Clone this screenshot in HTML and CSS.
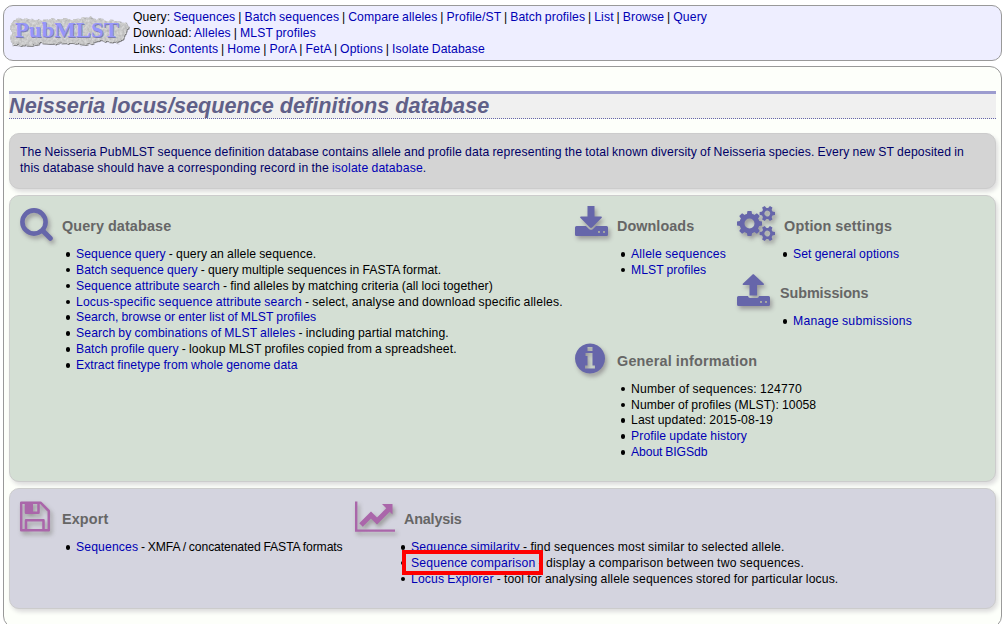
FILE: index.html
```html
<!DOCTYPE html>
<html lang="en">
<head>
<meta charset="utf-8">
<title>Neisseria locus/sequence definitions database</title>
<link rel="stylesheet" href="styles.css">
</head>
<body>
<header class="masthead">
  <svg class="logo" viewBox="8 10 124 44" role="img" aria-label="PubMLST">
    <defs>
      <filter id="rock" x="-5%" y="-15%" width="110%" height="130%" color-interpolation-filters="sRGB">
        <feTurbulence type="fractalNoise" baseFrequency="0.2" numOctaves="2" seed="4" result="n"/>
        <feDisplacementMap in="SourceGraphic" in2="n" scale="5" xChannelSelector="R" yChannelSelector="G" result="shape"/>
        <feTurbulence type="fractalNoise" baseFrequency="0.4" numOctaves="2" seed="9" result="g"/>
        <feColorMatrix in="g" type="matrix" values="0.22 0 0 0 0.68  0.22 0 0 0 0.68  0.22 0 0 0 0.68  0 0 0 0 1" result="grey"/>
        <feComposite in="grey" in2="shape" operator="in" result="stone"/>
        <feDropShadow in="stone" dx="0.6" dy="0.8" stdDeviation="0.4" flood-color="#666"/>
      </filter>
    </defs>
    <path filter="url(#rock)" fill="#c6c6c6" d="M15 20L22 18L34 20L54 19L76 19L84 17L104 20L127 22L128 28L123 39L116 43L98 41L86 45L72 43L50 44L39 43L32 46L14 45L11 39L12 31L10 27Z"/>
    <text class="logo-shade" x="15.600" y="37.600" textLength="104" lengthAdjust="spacingAndGlyphs">PubMLST</text>
    <text class="logo-text" x="15" y="37" textLength="104" lengthAdjust="spacingAndGlyphs">PubMLST</text>
  </svg>
  <nav class="menu">
    <div>Query: <a>Sequences</a> | <a>Batch sequences</a> | <a>Compare alleles</a> | <a>Profile/ST</a> | <a>Batch profiles</a> | <a>List</a> | <a>Browse</a> | <a>Query</a></div>
    <div class="t13">Download: <a>Alleles</a> | <a>MLST profiles</a></div>
    <div>Links: <a>Contents</a> | <a>Home</a> | <a>PorA</a> | <a>FetA</a> | <a>Options</a> | <a>Isolate Database</a></div>
  </nav>
</header>
<main class="page">
  <h1>Neisseria locus/sequence definitions database</h1>
  <div class="box intro">
    <div class="t13">The Neisseria PubMLST sequence definition database contains allele and profile data representing the total known diversity of Neisseria species. Every new ST deposited in</div>
    <div class="t15">this database should have a corresponding record in the <a>isolate database</a>.</div>
  </div>
  <div class="box queries">
    <section class="query">
      <div class="head">
        <svg class="icon" width="42" height="41" viewBox="20 205 42 41"><circle cx="34" cy="222" r="11.6" fill="none" stroke="#66a" stroke-width="4.6"/><path d="M43.5 231.5L50.3 238.3" stroke="#66a" stroke-width="5" stroke-linecap="round"/></svg>
        <h2>Query database</h2>
      </div>
      <ul>
        <li class="t10"><a>Sequence query</a> - query an allele sequence.</li>
        <li class="t6"><a>Batch sequence query</a> - query multiple sequences in FASTA format.</li>
        <li class="t10"><a>Sequence attribute search</a> - find alleles by matching criteria (all loci together)</li>
        <li class="t15"><a>Locus-specific sequence attribute search</a> - select, analyse and download specific alleles.</li>
        <li class="t6"><a>Search, browse or enter list of MLST profiles</a></li>
        <li class="t11"><a>Search by combinations of MLST alleles</a> - including partial matching.</li>
        <li class="t10"><a>Batch profile query</a> - lookup MLST profiles copied from a spreadsheet.</li>
        <li class="t5"><a>Extract finetype from whole genome data</a></li>
      </ul>
    </section>
    <div class="side">
      <section>
        <div class="head">
          <svg class="icon" width="42" height="41" viewBox="575 205 42 41"><path fill="#66a" fill-rule="evenodd" d="M587.5 206h7v10.5h6.5c1 0 1.200 .8 .5 1.500l-9.500 9.500c-.6.600-1.400.600-2 0l-9.500-9.500c-.7-.7-.5-1.500.5-1.500h6.500zM575 227.500q0-1.500 1.500-1.500h9.500l3 3q2 1.700 4 0l3-3h10.500q1.500 0 1.500 1.500v7q0 1.500-1.500 1.500h-30q-1.500 0-1.500-1.500zM598 231v2h2v-2zM603 231v2h2v-2z"/></svg>
          <h2 class="t5">Downloads</h2>
        </div>
        <ul>
          <li class="t20"><a>Allele sequences</a></li>
          <li class="t5"><a>MLST profiles</a></li>
        </ul>
      </section>
      <div class="stack">
        <section>
          <div class="head">
            <svg class="icon" width="47" height="41" viewBox="737 205 47 41">
              <defs>
                <g id="gear">
                  <circle r="7.500" fill="none" stroke="#66a" stroke-width="5"/>
                  <path fill="#66a" d="M-2-12.500h4l.8 4h-5.600zM-2 12.500h4l.8-4h-5.600zM-12.500-2v4l4 .8v-5.600zM12.500-2v4l-4 .8v-5.600z"/>
                  <path transform="rotate(45)" fill="#66a" d="M-2-12.500h4l.8 4h-5.600zM-2 12.500h4l.8-4h-5.600zM-12.500-2v4l4 .8v-5.600zM12.500-2v4l-4 .8v-5.600z"/>
                </g>
                <g id="cog">
                  <circle r="4.200" fill="none" stroke="#66a" stroke-width="2.800"/>
                  <g id="teeth"><path id="tooth" fill="#66a" d="M-1.500-7.700h3l.6 3.200h-4.200z"/><use href="#tooth" transform="rotate(60)"/><use href="#tooth" transform="rotate(120)"/></g>
                  <use href="#teeth" transform="rotate(180)"/>
                </g>
              </defs>
              <use href="#gear" x="749.500" y="223.500"/>
              <use href="#cog" transform="translate(767.300 213.500) rotate(30)"/>
              <use href="#cog" transform="translate(767.300 233.500) rotate(30)"/>
            </svg>
            <h2 class="t20">Option settings</h2>
          </div>
          <ul><li class="t10"><a>Set general options</a></li></ul>
        </section>
        <section>
          <div class="head">
            <svg class="icon" width="43" height="41" viewBox="737 272 43 41"><path fill="#66a" fill-rule="evenodd" d="M749.500 295.500v-10.500h-6c-1 0-1.200-.8-.5-1.500l9.300-8.700c.6-.6 1.400-.6 2 0l9.300 8.700c.7.700.5 1.500-.5 1.500h-6v10.500zM737 297.500q0-1.500 1.500-1.500h9.500q.5 2 2 2h7q1.500 0 2-2h9.500q1.500 0 1.500 1.500v7q0 1.500-1.500 1.500h-30q-1.500 0-1.500-1.500zM760 301v2h2v-2zM765 301v2h2v-2z"/></svg>
            <h2 class="t-10">Submissions</h2>
          </div>
          <ul><li class="t28"><a>Manage submissions</a></li></ul>
        </section>
      </div>
      <section class="wide">
        <div class="head">
          <svg class="icon" width="42" height="41" viewBox="575 340 42 41"><path fill="#66a" fill-rule="evenodd" d="M590 343.500a15 15 0 1 0 .01 0zM587.500 347h5v4h-5zM585.500 353h7v12.500h2.500v3h-10v-3h2.500v-9.500h-2z"/></svg>
          <h2 class="t20">General information</h2>
        </div>
        <ul class="facts">
          <li class="t20">Number of sequences: 124770</li>
          <li class="t8">Number of profiles (MLST): 10058</li>
          <li class="t13">Last updated: 2015-08-19</li>
          <li class="t10"><a>Profile update history</a></li>
          <li class="t-10"><a>About BIGSdb</a></li>
        </ul>
      </section>
    </div>
  </div>
  <div class="box tools">
    <section class="export">
      <div class="head">
        <svg class="icon" width="42" height="41" viewBox="20 498 42 41"><path fill="none" stroke="#a6a" stroke-width="2.500" stroke-linejoin="round" d="M21.200 502.700H40.500L48.800 511V530.300H21.200zM26 530V520.200H43.500V530M26 503V512.700H38.500V503"/><path fill="#a6a" d="M26 503h7v9h-7z"/></svg>
        <h2>Export</h2>
      </div>
      <ul><li class="t-12"><a class="t13">Sequences</a> - XMFA / concatenated FASTA formats</li></ul>
    </section>
    <section class="analysis">
      <div class="head">
        <svg class="icon" width="49" height="41" viewBox="355 498 49 41"><path fill="none" stroke="#a6a" stroke-width="2.400" d="M356.200 501.500V530.600H395"/><path fill="none" stroke="#a6a" stroke-width="5" d="M361 525L371 515L377 521L389.500 508.500"/><path fill="#a6a" d="M382 504h10.500v10.500z"/></svg>
        <h2 class="t-20">Analysis</h2>
      </div>
      <ul>
        <li class="t18"><a>Sequence similarity</a> - find sequences most similar to selected allele.</li>
        <li class="t18"><a class="marked">Sequence comparison</a> - display a comparison between two sequences.</li>
        <li><a>Locus Explorer</a> - tool for analysing allele sequences stored for particular locus.</li>
      </ul>
    </section>
  </div>
</main>
</body>
</html>
```
FILE: styles.css
```css
*, *::before, *::after { box-sizing: border-box; }
html { overflow: hidden; }
body {
  margin: 0;
  padding: 5px 3px 0;
  width: 1005px;
  height: 624px;
  overflow: hidden;
  background: #fff;
  color: #000;
  font: 12.2px/15.84px "Liberation Sans", Arial, sans-serif;
  word-spacing: -0.4px;
  letter-spacing: 0.12px;
}
a { color: #0000b4; }
.masthead {
  display: flex;
  width: 999px;
  height: 56px;
  padding: 4px 5px 0 4px;
  border: 1px solid #999;
  border-radius: 10px;
  background: #eef;
}
.logo { width: 124px; height: 44px; flex: none; }
.logo text { font: bold 20.5px "Liberation Serif", serif; letter-spacing: 0; }
.logo-text { fill: #9696fa; }
.logo-shade { fill: #7c7cb0; }
.menu { margin-left: 1px; white-space: nowrap; word-spacing: -0.6px; }
.page {
  width: 999px;
  height: 562px;
  margin-top: 5px;
  padding: 24px 5px 0;
  border: 1px solid #999;
  border-radius: 12px;
  background: #fdfffa;
}
h1 {
  margin: 0 0 14px;
  height: 28px;
  border-top: 3px solid #9c9ccf;
  border-bottom: 1px dotted #66a;
  background: #f0f0f0;
  color: #606088;
  font: italic bold 21.66px/23px "Liberation Sans", Arial, sans-serif;
  letter-spacing: 0;
  word-spacing: 0;
}
.box {
  width: 987px;
  margin-bottom: 6px;
  border: 1px solid #ccc;
  border-radius: 10px;
  box-shadow: 2px 3px 4px #ddd;
  white-space: nowrap;
}
.intro { height: 56px; padding: 11px 10px 0; background: #d4d4d4; color: #006; }
.queries { display: flex; height: 287px; padding: 9px 10px; background: #d4dfd4; }
.tools { display: flex; height: 121px; padding: 9px 10px; background: #d4d4df; }
.query { flex: none; width: 555px; }
.export { flex: none; width: 335px; }
.side { display: grid; grid-template-columns: 162px 240px; grid-template-rows: 135px auto; }
.wide { grid-column: 1 / 3; }
.stack { display: grid; grid-template-rows: 67px 67px; }
.head { display: flex; align-items: center; height: 41px; }
.icon { flex: none; overflow: visible; filter: drop-shadow(2px 3px 2px #999); }
h2 { margin: 0; color: #666; font: bold 14.4px/18px "Liberation Sans", Arial, sans-serif; }
ul { margin: 0; padding: 1px 0 0 56px; list-style: none; }
.facts { padding-top: 0.7px; }
li::before {
  content: "";
  float: left;
  width: 4.6px;
  height: 4.6px;
  margin: 5px 0 0 -10.4px;
  border-radius: 50%;
  background: #000;
}
.marked { position: relative; }
.marked::after {
  content: "";
  position: absolute;
  left: -9px;
  top: -6px;
  width: 141px;
  height: 25px;
  border: 4px solid #f00;
}

/* Tracking steps, in hundredths of a pixel */
.t-20 { letter-spacing: -0.2px; }
.t-12 { letter-spacing: -0.12px; }
.t-10 { letter-spacing: -0.1px; }
.t5 { letter-spacing: 0.05px; }
.t6 { letter-spacing: 0.06px; }
.t8 { letter-spacing: 0.08px; }
.t10 { letter-spacing: 0.1px; }
.t11 { letter-spacing: 0.11px; }
.t13 { letter-spacing: 0.13px; }
.t15 { letter-spacing: 0.155px; }
.t18 { letter-spacing: 0.185px; }
.t20 { letter-spacing: 0.2px; }
.t28 { letter-spacing: 0.28px; }
```
